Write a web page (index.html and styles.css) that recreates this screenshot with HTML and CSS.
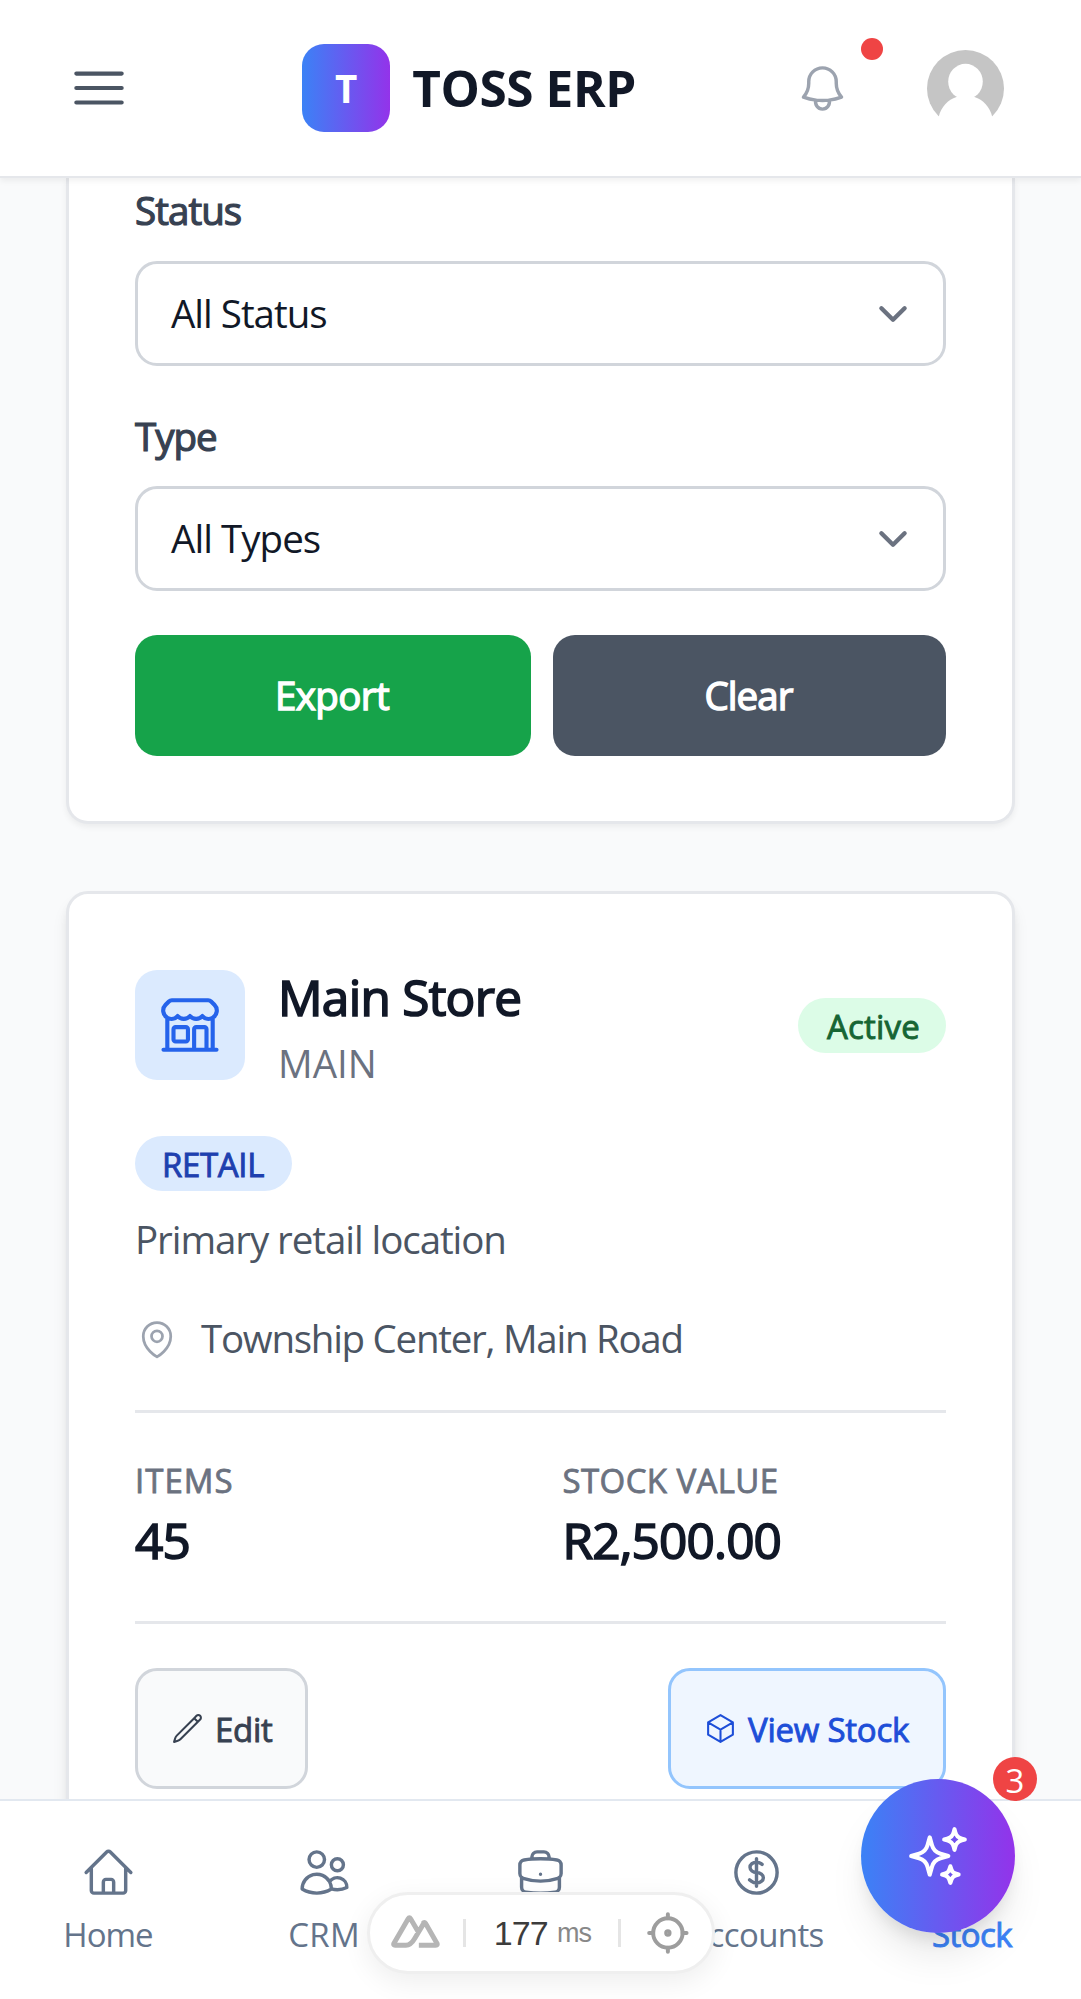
FILE: index.html
```html
<!DOCTYPE html>
<html lang="en">
<head>
<meta charset="utf-8">
<title>TOSS ERP</title>
<link rel="stylesheet" href="styles.css">
</head>
<body>
<div class="app">
  <header class="topbar">
    <svg class="icon icon-lg menu" viewBox="0 0 24 24"><path d="M3.75 6.75h16.5M3.75 12h16.5m-16.5 5.25h16.5"/></svg>
    <div class="brand">
      <div class="brand-mark">T</div>
      <div class="brand-name">TOSS ERP</div>
    </div>
    <div class="topbar-actions">
      <div class="bell">
        <svg class="icon icon-md" viewBox="0 0 24 24"><path d="M14.857 17.082a23.848 23.848 0 0 0 5.454-1.31A8.967 8.967 0 0 1 18 9.75V9A6 6 0 0 0 6 9v.75a8.967 8.967 0 0 1-2.312 6.022c1.733.64 3.56 1.085 5.455 1.31m5.714 0a24.255 24.255 0 0 1-5.714 0m5.714 0a3 3 0 1 1-5.714 0"/></svg>
        <span class="bell-dot"></span>
      </div>
      <svg class="avatar" viewBox="0 0 77 77"><circle cx="38.5" cy="38.5" r="38.5" fill="#c5c5c5"/><ellipse cx="38.5" cy="31.6" rx="17.3" ry="17.8" fill="#fff"/><path d="M5 77 11.7 67C14 57 21 49.500 29.500 47H47.500C56 49.500 63 57 65.300 67L72 77Z" fill="#fff"/></svg>
    </div>
  </header>

  <main class="content">
    <section class="card filters">
      <label class="label label-status">Status</label>
      <div class="select"><span class="opt-status">All Status</span><svg class="chevron" viewBox="0 0 20 20"><path d="m6 8 4 4 4-4"/></svg></div>
      <label class="label label-type">Type</label>
      <div class="select"><span class="opt-type">All Types</span><svg class="chevron" viewBox="0 0 20 20"><path d="m6 8 4 4 4-4"/></svg></div>
      <div class="filter-actions">
        <button class="btn btn-export">Export</button>
        <button class="btn btn-clear">Clear</button>
      </div>
    </section>

    <section class="card store">
      <div class="store-head">
        <div class="store-icon">
          <svg class="icon icon-lg" viewBox="0 0 24 24"><path d="M13.5 21v-7.5a.75.75 0 0 1 .75-.75h3a.75.75 0 0 1 .75.75V21m-4.5 0H2.36m11.14 0H18m0 0h3.64m-1.39 0V9.349M3.75 21V9.349m0 0a3.001 3.001 0 0 0 3.75-.615A2.993 2.993 0 0 0 9.75 9.75c.896 0 1.7-.393 2.25-1.016a2.993 2.993 0 0 0 2.25 1.016c.896 0 1.7-.393 2.25-1.015a3.001 3.001 0 0 0 3.75.614m-16.5 0a3.004 3.004 0 0 1-.621-4.72l1.189-1.19A1.5 1.5 0 0 1 5.378 3h13.243a1.5 1.5 0 0 1 1.06.44l1.19 1.189a3 3 0 0 1-.621 4.72M6.75 18h3.75a.75.75 0 0 0 .75-.75V13.500a.75.75 0 0 0-.75-.75H6.75a.75.75 0 0 0-.75.75v3.750c0 .414.336.75.75.75Z"/></svg>
        </div>
        <div class="store-title">
          <h3>Main Store</h3>
          <p>MAIN</p>
        </div>
        <span class="pill pill-active">Active</span>
      </div>
      <span class="pill pill-retail">RETAIL</span>
      <p class="store-desc">Primary retail location</p>
      <div class="store-address">
        <svg class="icon icon-sm" viewBox="0 0 24 24"><path d="M15 10.5a3 3 0 1 1-6 0 3 3 0 0 1 6 0Z"/><path d="M19.5 10.5c0 7.142-7.5 11.250-7.5 11.250S4.500 17.642 4.500 10.500a7.500 7.500 0 1 1 15 0Z"/></svg>
        <span>Township Center, Main Road</span>
      </div>
      <div class="stats">
        <div><div class="stat-label stat-items">ITEMS</div><div class="stat-value">45</div></div>
        <div><div class="stat-label">STOCK VALUE</div><div class="stat-value">R2,500.00</div></div>
      </div>
      <div class="store-actions">
        <button class="action action-edit"><svg class="icon icon-xs" viewBox="0 0 24 24"><path d="m16.862 4.487 1.687-1.688a1.875 1.875 0 1 1 2.652 2.652L6.832 19.820a4.500 4.500 0 0 1-1.897 1.130l-2.685.800.800-2.685a4.500 4.500 0 0 1 1.130-1.897L16.862 4.487Zm0 0L19.500 7.125"/></svg><span>Edit</span></button>
        <button class="action action-view"><svg class="icon icon-xs" viewBox="0 0 24 24"><path d="m21 7.500-9-5.250L3 7.500m18 0-9 5.250m9-5.250v9l-9 5.250M3 7.500l9 5.250M3 7.500v9l9 5.250m0-9v9"/></svg><span>View Stock</span></button>
      </div>
    </section>
  </main>

  <nav class="tabs">
    <a class="tab"><svg class="icon icon-md" viewBox="0 0 24 24"><path d="m2.25 12 8.954-8.955c.44-.439 1.152-.439 1.591 0L21.750 12M4.500 9.750v10.125c0 .621.504 1.125 1.125 1.125H9.750v-4.875c0-.621.504-1.125 1.125-1.125h2.250c.621 0 1.125.504 1.125 1.125V21h4.125c.621 0 1.125-.504 1.125-1.125V9.750M8.250 21h8.250"/></svg><span class="tab-home">Home</span></a>
    <a class="tab"><svg class="icon icon-md" viewBox="0 0 24 24"><path d="M15 19.128a9.380 9.380 0 0 0 2.625.372 9.337 9.337 0 0 0 4.121-.952 4.125 4.125 0 0 0-7.533-2.493M15 19.128v-.003c0-1.113-.285-2.160-.786-3.070M15 19.128v.106A12.318 12.318 0 0 1 8.624 21c-2.331 0-4.512-.645-6.374-1.766l-.001-.109a6.375 6.375 0 0 1 11.964-3.070M12 6.375a3.375 3.375 0 1 1-6.750 0 3.375 3.375 0 0 1 6.750 0Zm8.250 2.250a2.625 2.625 0 1 1-5.250 0 2.625 2.625 0 0 1 5.250 0Z"/></svg><span class="tab-crm">CRM</span></a>
    <a class="tab"><svg class="icon icon-md" viewBox="0 0 24 24"><path d="M20.250 14.150v4.250c0 1.094-.787 2.036-1.872 2.180-2.087.277-4.216.420-6.378.420s-4.291-.143-6.378-.420c-1.085-.144-1.872-1.086-1.872-2.180v-4.250m16.500 0a2.180 2.180 0 0 0 .750-1.661V8.706c0-1.081-.768-2.015-1.837-2.175a48.114 48.114 0 0 0-3.413-.387m4.500 8.006c-.194.165-.420.295-.673.380A23.978 23.978 0 0 1 12 15.750c-2.648 0-5.195-.429-7.577-1.220a2.016 2.016 0 0 1-.673-.380m0 0A2.180 2.180 0 0 1 3 12.489V8.706c0-1.081.768-2.015 1.837-2.175a48.111 48.111 0 0 1 3.413-.387m7.500 0V5.250A2.250 2.250 0 0 0 13.500 3h-3a2.250 2.250 0 0 0-2.250 2.250v.894m7.500 0a48.667 48.667 0 0 0-7.500 0M12 12.750h.008v.008H12v-.008Z"/></svg></a>
    <a class="tab"><svg class="icon icon-md" viewBox="0 0 24 24"><path d="M12 6v12m-3-2.818.879.659c1.171.879 3.070.879 4.242 0 1.172-.879 1.172-2.303 0-3.182C13.536 12.219 12.768 12 12 12c-.725 0-1.450-.220-2.003-.659-1.106-.879-1.106-2.303 0-3.182s2.900-.879 4.006 0l.415.330M21 12a9 9 0 1 1-18 0 9 9 0 0 1 18 0Z"/></svg><span class="tab-accounts">Accounts</span></a>
    <a class="tab tab-active"><svg class="icon icon-md" viewBox="0 0 24 24"><path d="m21 7.500-9-5.250L3 7.500m18 0-9 5.250m9-5.250v9l-9 5.250M3 7.500l9 5.250M3 7.500v9l9 5.250m0-9v9"/></svg><span>Stock</span></a>
  </nav>

  <div class="devtools">
    <svg class="nuxt" viewBox="0 0 50 38"><path d="M33.500 8.300 24 24.300Q20 31.300 15 31.300H4.200Q2 31.300 3 29.200L17.300 4.600Q18.500 2.600 19.700 4.600L27.500 18M28 31.300H45Q47.200 31.300 46.200 29.200L34.700 9.300Q33.500 7.300 32.300 9.300"/></svg>
    <i class="sep"></i>
    <span class="timing">177</span><span class="unit">ms</span>
    <i class="sep"></i>
    <svg class="target" viewBox="0 0 42 42"><circle cx="21" cy="21" r="14.800"/><path d="M21 2.200v4M21 35.800v4M2.200 21h4M35.800 21h4"/><circle cx="21" cy="21" r="1.700"/></svg>
  </div>

  <button class="fab"><svg class="icon icon-lg" viewBox="0 0 24 24"><path d="M9.813 15.904 9 18.750l-.813-2.846a4.500 4.500 0 0 0-3.090-3.090L2.250 12l2.846-.813a4.500 4.500 0 0 0 3.090-3.090L9 5.250l.813 2.846a4.500 4.500 0 0 0 3.090 3.090L15.750 12l-2.846.813a4.500 4.500 0 0 0-3.090 3.090ZM18.259 8.715 18 9.750l-.259-1.035a3.375 3.375 0 0 0-2.455-2.456L14.250 6l1.036-.259a3.375 3.375 0 0 0 2.455-2.456L18 2.250l.259 1.035a3.375 3.375 0 0 0 2.456 2.456L21.750 6l-1.035.259a3.375 3.375 0 0 0-2.456 2.456ZM16.894 20.567 16.500 21.750l-.394-1.183a2.250 2.250 0 0 0-1.423-1.423L13.500 18.750l1.183-.394a2.250 2.250 0 0 0 1.423-1.423l.394-1.183.394 1.183a2.250 2.250 0 0 0 1.423 1.423l1.183.394-1.183.394a2.250 2.250 0 0 0-1.423 1.423Z"/></svg></button>
  <span class="fab-badge">3</span>
</div>
</body>
</html>
```
FILE: styles.css
```css
* { box-sizing: border-box; margin: 0; padding: 0; }

body {
  font-family: "Open Sans", "Noto Sans", sans-serif;
  font-size: 38.5px;
  line-height: 55px;
  color: #111827;
}

button { font: inherit; border: 0; }

.app {
  position: relative;
  display: flex;
  flex-direction: column;
  width: 1081px;
  height: 1999px;
  overflow: hidden;
  background: #f9fafb;
}

/* icons */
.icon {
  display: block;
  flex: none;
  fill: none;
  stroke: currentColor;
  stroke-width: 1.5;
  stroke-linecap: round;
  stroke-linejoin: round;
}
.icon-lg { width: 66px; height: 66px; }
.icon-md { width: 55px; height: 55px; }
.icon-sm { width: 44px; height: 44px; }
.icon-xs { width: 33px; height: 33px; }

/* top bar */
.topbar {
  position: relative;
  z-index: 1;
  flex: none;
  display: flex;
  align-items: center;
  justify-content: space-between;
  height: 178px;
  padding: 0 77px 0 66px;
  background: #fff;
  border-bottom: 2px solid #e5e7eb;
  box-shadow: 0 3px 6px rgba(0, 0, 0, .06);
}
.menu { color: #4b5563; }
.brand { display: flex; align-items: center; gap: 22px; margin-left: 11px; }
.brand-mark {
  width: 88px;
  height: 88px;
  border-radius: 22px;
  background: linear-gradient(to right, #3b82f6, #9333ea);
  color: #fff;
  font-weight: 700;
  line-height: 88px;
  text-align: center;
}
.brand-name {
  font-size: 49.5px;
  font-weight: 700;
  line-height: 77px;
  letter-spacing: -.4px;
}
.topbar-actions { display: flex; align-items: center; gap: 77px; }
.bell { position: relative; color: #9ca3af; }
.bell-dot {
  position: absolute;
  top: -23px;
  right: -33px;
  width: 22px;
  height: 22px;
  border-radius: 50%;
  background: #ef4444;
}
.avatar { width: 77px; height: 77px; }

/* cards */
.content { flex: 1; min-height: 0; padding: 0 66px; overflow: hidden; }
.card {
  border: 3px solid #e5e7eb;
  border-radius: 22px;
  padding: 65px 66px;
  background: #fff;
}

.filters {
  padding-top: 5px;
  border-top: 0;
  border-radius: 0 0 22px 22px;
  box-shadow: 0 3px 6px rgba(0, 0, 0, .06);
}
.label {
  display: block;
  margin-bottom: 23px;
  color: #374151;
  -webkit-text-stroke: 1.2px currentColor;
}
.label-status { letter-spacing: -.95px; }
.label-type { margin-top: 43px; margin-bottom: 22px; letter-spacing: -1px; }
.select {
  display: flex;
  align-items: center;
  justify-content: space-between;
  height: 105px;
  padding: 0 21px 0 33px;
  border: 3px solid #d1d5db;
  border-radius: 22px;
  background: #fff;
}
.opt-status { letter-spacing: -1px; }
.opt-type { letter-spacing: -.95px; }
.chevron {
  width: 58px;
  height: 58px;
  fill: none;
  stroke: #6b7280;
  stroke-width: 1.5;
  stroke-linecap: round;
  stroke-linejoin: round;
}
.filter-actions {
  display: grid;
  grid-template-columns: 396px 393px;
  gap: 22px;
  margin-top: 44px;
}
.btn {
  height: 121px;
  padding: 0 2px 1px 0;
  border-radius: 22px;
  color: #fff;
  -webkit-text-stroke: 1.4px currentColor;
}
.btn-export { background: #16a34a; letter-spacing: -.6px; }
.btn-clear { background: #4b5563; letter-spacing: -.9px; }

/* store card */
.store {
  height: 990px;
  margin-top: 67px;
  box-shadow: 0 11px 17px -3px rgba(0, 0, 0, .1), 0 6px 11px -4px rgba(0, 0, 0, .1);
}
.store-head { display: flex; align-items: center; }
.store-icon {
  display: grid;
  place-items: center;
  width: 110px;
  height: 110px;
  border-radius: 22px;
  background: #dbeafe;
  color: #2563eb;
}
.store-title { flex: 1; margin-left: 33px; }
.store-title h3 {
  font-size: 49.5px;
  font-weight: 400;
  line-height: 77px;
  letter-spacing: -.7px;
  -webkit-text-stroke: 1.7px currentColor;
}
.store-title p { color: #6b7280; }
.pill {
  display: block;
  height: 55px;
  padding: 7px 29px 4px;
  border-radius: 28px;
  font-size: 33px;
  line-height: 44px;
  -webkit-text-stroke: .9px currentColor;
}
.pill-active { width: 148px; background: #dcfce7; color: #166534; letter-spacing: .2px; }
.pill-retail {
  width: 157px;
  margin-top: 45px;
  padding-left: 27px;
  background: #dbeafe;
  color: #1e40af;
  letter-spacing: -.35px;
}
.store-desc { margin-top: 21px; color: #4b5563; letter-spacing: -1.07px; }
.store-address {
  display: flex;
  align-items: center;
  gap: 22px;
  margin-top: 44px;
  color: #4b5563;
  letter-spacing: -1.27px;
}
.store-address .icon { color: #9ca3af; }

.stats {
  display: grid;
  grid-template-columns: 1fr 1fr;
  gap: 44px;
  margin-top: 44px;
  padding: 46px 0 42px;
  border-top: 3px solid #e5e7eb;
  border-bottom: 3px solid #e5e7eb;
}
.stat-label {
  font-size: 33px;
  line-height: 44px;
  color: #6b7280;
  letter-spacing: .4px;
  -webkit-text-stroke: .8px currentColor;
}
.stat-items { letter-spacing: 1px; }
.stat-value {
  font-size: 49.5px;
  line-height: 77px;
  margin-top: -1px;
  letter-spacing: -.85px;
  -webkit-text-stroke: 1.7px currentColor;
}

.store-actions { display: flex; justify-content: space-between; margin-top: 44px; }
.action {
  display: flex;
  align-items: center;
  gap: 11px;
  height: 121px;
  padding: 0 33px;
  border: 3px solid;
  border-radius: 22px;
  font-size: 33px;
  line-height: 44px;
}
.action span { -webkit-text-stroke: .9px currentColor; padding-top: 3px; }
.action-edit { width: 173px; border-color: #d1d5db; background: #f9fafb; color: #374151; letter-spacing: -.3px; }
.action-view { width: 278px; border-color: #93c5fd; background: #eff6ff; color: #1d4ed8; letter-spacing: -.25px; }

/* bottom tabs */
.tabs {
  flex: none;
  display: grid;
  grid-template-columns: repeat(5, 1fr);
  height: 200px;
  padding: 44px 1px 0 0;
  border-top: 2px solid #e2e8f0;
  background: #fff;
}
.tab {
  display: flex;
  flex-direction: column;
  align-items: center;
  gap: 13px;
  color: #64748b;
  font-size: 33px;
  line-height: 44px;
}
.tab-home { letter-spacing: -1px; }
.tab-crm { letter-spacing: .3px; }
.tab-accounts { letter-spacing: -.6px; }
.tab-active { color: #3b82f6; letter-spacing: -.6px; -webkit-text-stroke: .9px currentColor; }

/* floating timing bar */
.devtools {
  position: absolute;
  left: 367px;
  top: 1892px;
  display: flex;
  align-items: center;
  width: 348px;
  height: 82px;
  padding: 0 23px;
  border: 3px solid #efefef;
  border-radius: 41px;
  background: #fff;
  box-shadow: 0 8px 28px rgba(0, 0, 0, .07);
  font-family: "Liberation Sans", Arial, sans-serif;
}
.nuxt {
  width: 50px;
  height: 38px;
  margin-left: -2px;
  fill: none;
  stroke: #b5b5b5;
  stroke-width: 5;
  stroke-linejoin: round;
}
.sep { width: 3px; height: 28px; margin-left: 22px; background: #e5e5e5; }
.timing { margin-left: 28px; font-size: 34px; letter-spacing: -.85px; color: #3c3c3c; }
.unit { margin: 0 5px 0 9px; font-size: 27px; letter-spacing: -.8px; color: #888; }
.target {
  width: 42px;
  height: 42px;
  margin-left: 26px;
  fill: none;
  stroke: #9d9d9d;
  stroke-width: 4;
  stroke-linecap: round;
}

/* assistant button */
.fab {
  position: absolute;
  left: 861px;
  top: 1779px;
  display: grid;
  place-items: center;
  width: 154px;
  height: 154px;
  border-radius: 50%;
  background: linear-gradient(to right, #3b82f6, #9333ea);
  color: #fff;
  box-shadow: 0 27px 41px -8px rgba(0, 0, 0, .1), 0 11px 17px -6px rgba(0, 0, 0, .1);
}
.fab-badge {
  position: absolute;
  left: 993px;
  top: 1757px;
  width: 44px;
  height: 44px;
  border-radius: 50%;
  background: #ef4444;
  color: #fff;
  font-size: 33px;
  line-height: 47px;
  text-align: center;
}
```
